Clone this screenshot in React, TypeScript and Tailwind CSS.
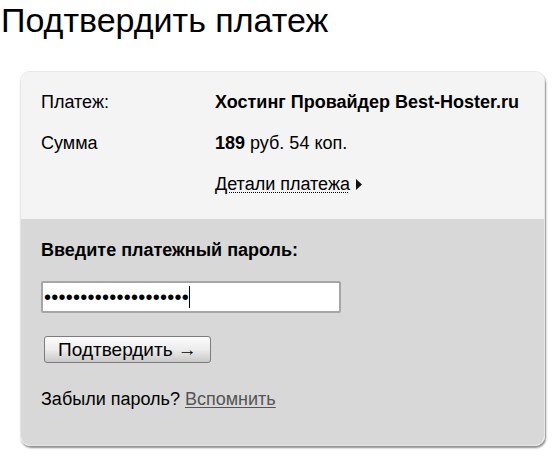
import React from "react";

const rows = [
  { label: "Платеж:", value: <b>Хостинг Провайдер Best-Hoster.ru</b> },
  {
    label: "Сумма",
    value: (
      <>
        <b>189</b> руб. 54 коп.
      </>
    ),
  },
];

export default function App() {
  return (
    <div className="min-h-screen bg-white text-black font-['Liberation_Sans',Arial,sans-serif]">
      <h1 className="pl-[1px] text-[34px] leading-[40px] font-normal">Подтвердить платеж</h1>

      <div className="ml-[20px] mt-[31px] w-[525px] rounded-[10px] overflow-hidden border border-[#e6e6e6] shadow-[1px_2px_2px_rgba(0,0,0,0.45)]">
        {/* payment info */}
        <div className="bg-[#f4f4f4] pl-[20px] pt-[20px] pb-[25px] flex flex-col gap-[21px] text-[18px] leading-[20px]">
          {rows.map((r) => (
            <div key={r.label} className="flex">
              <div className="w-[174px]">{r.label}</div>
              <div>{r.value}</div>
            </div>
          ))}
          <div className="flex">
            <div className="w-[174px]" />
            <a className="flex items-center gap-[6px] cursor-pointer">
              <span className="underline decoration-dotted decoration-1 underline-offset-[2px]">
                Детали платежа
              </span>
              <svg width="6" height="11" viewBox="0 0 6 11">
                <path d="M0 0 L6 5.5 L0 11 Z" fill="#111" />
              </svg>
            </a>
          </div>
        </div>

        {/* password */}
        <div className="bg-[#d8d8d8] pl-[20px] pt-[21px] pb-[36px] text-[18px] leading-[20px]">
          <div className="font-bold">Введите платежный пароль:</div>

          <div className="mt-[21px] w-[300px] h-[32px] bg-white border-2 border-[#a6a6a6] rounded-[2px] flex items-center pl-[1px]">
            <span className="text-[20px] tracking-[0.25px] leading-none">••••••••••••••••••••</span>
            <span className="w-px h-[22px] bg-black" />
          </div>

          <button className="mt-[23px] ml-[3px] w-[167px] h-[27px] border border-[#7c7c7c] rounded-[3px] bg-gradient-to-b from-[#fdfdfd] via-[#ececec] to-[#c9c9c9] text-[19px] leading-none">
            Подтвердить →
          </button>

          <div className="mt-[26px]">
            Забыли пароль?{" "}
            <a className="text-[#555] underline underline-offset-[2px] cursor-pointer">Вспомнить</a>
          </div>
        </div>
      </div>
    </div>
  );
}
